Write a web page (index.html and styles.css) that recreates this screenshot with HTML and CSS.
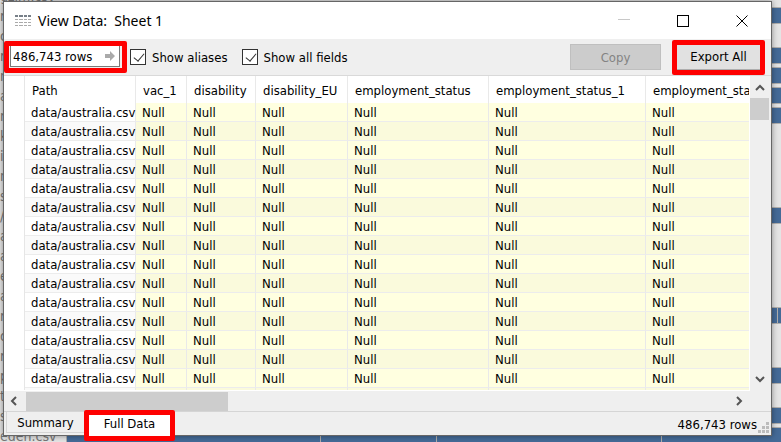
FILE: index.html
```
<!DOCTYPE html>
<html lang="en">
<head>
    <meta charset="UTF-8">
    <meta name="viewport" content="width=device-width, initial-scale=1.0">
    <title>View Data: Sheet 1</title>
    <link rel="stylesheet" href="styles.css">
</head>
<body>
    <div class="backdrop" aria-hidden="true">
        <div class="file-list" id="file-list"></div>
        <div class="chart" id="chart"></div>
    </div>

    <main class="window">
        <header class="title-bar">
            <svg class="sheet-icon" width="16" height="12" viewBox="0 0 16 12">
                <path d="M0 1h3M4 1h4M9 1h3M13 1h3" stroke="#777f88" stroke-width="2"/>
                <path d="M0 4.500h3M4 4.500h4M9 4.500h3M13 4.500h3M0 7.500h3M4 7.500h4M9 7.500h3M13 7.500h3M0 10.500h3M4 10.500h4M9 10.500h3M13 10.500h3" stroke="#aaa"/>
            </svg>
            <h1>View Data:&nbsp; Sheet 1</h1>
            <button class="window-button" aria-label="Minimize">
                <svg width="12" height="12"><path d="M0 4.500h12" stroke="#c8c8c8"/></svg>
            </button>
            <button class="window-button" aria-label="Maximize">
                <svg width="12" height="12"><rect x=".5" y=".5" width="11" height="11" fill="none" stroke="#000"/></svg>
            </button>
            <button class="window-button" aria-label="Close">
                <svg width="12" height="12"><path d="M.5 .5l11 11M11.500 .5l-11 11" stroke="#000"/></svg>
            </button>
        </header>

        <div class="toolbar">
            <div class="row-count marked">
                <div class="field">
                    <input type="text" value="486,743 rows" aria-label="Row count">
                    <svg width="10" height="10"><path d="M0 3h5V0l5 5-5 5V7H0z" fill="#aaa"/></svg>
                </div>
            </div>
            <label class="check"><input type="checkbox" checked>Show aliases</label>
            <label class="check"><input type="checkbox" checked>Show all fields</label>
            <button class="tool-button copy" disabled>Copy</button>
            <div class="export marked"><button class="tool-button">Export All</button></div>
        </div>

        <div class="grid">
            <div class="table-view">
                <table>
                    <colgroup>
                        <col class="col-path"><col class="col-vac"><col class="col-dis"><col class="col-eu">
                        <col class="col-emp"><col class="col-emp-1"><col class="col-rest">
                    </colgroup>
                    <thead>
                        <tr><th>Path</th><th>vac_1</th><th>disability</th><th>disability_EU</th><th>employment_status</th><th>employment_status_1</th><th>employment_status_2</th></tr>
                    </thead>
                    <tbody id="rows"></tbody>
                </table>
            </div>
            <div class="scroll-y">
                <svg width="10" height="7"><path d="M1 6l4-4 4 4" fill="none" stroke="#555" stroke-width="2"/></svg>
                <div class="thumb"></div>
                <svg width="10" height="7"><path d="M1 1l4 4 4-4" fill="none" stroke="#555" stroke-width="2"/></svg>
            </div>
        </div>
        <div class="scroll-x">
            <svg width="7" height="10"><path d="M6 1L2 5l4 4" fill="none" stroke="#555" stroke-width="2"/></svg>
            <div class="thumb"></div>
            <svg width="7" height="10"><path d="M1 1l4 4-4 4" fill="none" stroke="#555" stroke-width="2"/></svg>
        </div>

        <footer class="status-bar">
            <button class="tab">Summary</button>
            <div class="tab-mark marked"><button class="tab active">Full Data</button></div>
            <span class="total">486,743 rows</span>
            <svg class="grip" width="11" height="11"><path d="M8 0h3v3H8zM4 4h3v3H4zM8 4h3v3H8zM0 8h3v3H0zM4 8h3v3H4zM8 8h3v3H8z" fill="#bbb"/></svg>
        </footer>
    </main>

    <script>
        const rows = document.getElementById('rows');
        for (let i = 0; i < 16; i++) {
            const row = rows.insertRow();
            row.insertCell().textContent = 'data/australia.csv';
            for (let c = 0; c < 6; c++) {
                row.insertCell().textContent = 'Null';
            }
        }

        // one label per line, with a bar where the file has data
        const names = ['gzim.csv', 'r', 'c', 'r', 'n', 'a', 'm', 'k', 'i', 'n', 's', '/', 'a', 'a', 'e', 'a', 'r', 'o', 'r', 'p', 't', 's', 'eden.csv'];
        const bars = {
            1: [], 3: [], 4: [], 5: [], 6: [], 11: [], 16: [711], 19: [], 21: [], 22: [254, 116, 225]
        };
        names.forEach((name, i) => {
            const label = document.createElement('span');
            label.textContent = name;
            document.getElementById('file-list').appendChild(label);
            const bar = document.createElement('div');
            bar.className = bars[i] ? 'bar filled' : 'bar';
            (bars[i] || []).forEach(width => {
                const part = document.createElement('div');
                part.className = 'part';
                part.style.width = width + 'px';
                bar.appendChild(part);
            });
            document.getElementById('chart').appendChild(bar);
        });
    </script>
</body>
</html>
```
FILE: styles.css
```
* {
    box-sizing: border-box;
}
body {
    margin: 0;
    height: 100vh;
    padding: 1px 9px 6px 3px;
    overflow: hidden;
    font-family: "DejaVu Sans Condensed", "Noto Sans", sans-serif;
    font-size: 13px;
    color: #000;
    background: #e4e4e4;
}
button, input {
    font: inherit;
    color: inherit;
}
button {
    border: none;
    padding: 0;
    background: none;
}
svg {
    display: block;
    flex: none;
}

/* the workbook behind the dialog */
.backdrop {
    position: absolute;
    inset: 0;
    display: flex;
    overflow: hidden;
}
.file-list {
    flex: none;
    width: 67px;
    display: flex;
    flex-direction: column;
    margin-top: -14px;
    font-size: 14px;
    line-height: 20px;
    color: #777;
}
.chart {
    flex: 1;
    margin-top: -14px;
}
.bar {
    display: flex;
    height: 15px;
    margin: 2px 0 5px;
}
.bar.filled {
    height: 15px;
    background: #446a97;
    outline: 1px solid #b0aeac;
}
.bar:first-child {
    margin-top: 0;
    height: 17px;
}
.part {
    flex: none;
    border-right: 1px solid #b0aeac;
}

.window {
    position: relative;
    height: 100%;
    display: flex;
    flex-direction: column;
    border: 1px solid #666;
    background: #efefef;
    box-shadow: 0 0 6px rgba(0, 0, 0, 0.4);
}
.title-bar {
    flex: none;
    height: 37px;
    display: flex;
    align-items: center;
    background: #fff;
}
.title-bar h1 {
    flex: 1;
    margin: 0 0 0 7px;
    font-family: "Noto Sans", sans-serif;
    font-size: 14px;
    font-weight: normal;
}
.sheet-icon {
    margin-left: 11px;
}
.window-button {
    width: 59px;
    height: 37px;
    display: flex;
    align-items: center;
    justify-content: center;
}

.toolbar {
    flex: none;
    height: 37px;
    display: flex;
    align-items: center;
    border-bottom: 1px solid #d9d9d9;
}
.marked {
    border: 5px solid #fe0000;
    border-radius: 2px;
}
.row-count {
    width: 123px;
    height: 32px;
    padding: 0 2px 1px 1px;
}
.field {
    height: 100%;
    display: flex;
    align-items: center;
    padding-right: 4px;
    border: 1px solid #7a7a7a;
    border-top: none;
    background: #fff;
}
.field input {
    flex: 1;
    min-width: 0;
    height: 20px;
    padding: 0 2px;
    border: none;
    background: none;
}
.check {
    display: flex;
    align-items: center;
    margin-left: 3px;
}
.check + .check {
    margin-left: 14px;
}
.check input {
    appearance: none;
    width: 16px;
    height: 16px;
    margin: 0 6px 0 0;
    border: 1px solid #333;
    background: #fff;
}
.check input:checked::before {
    content: "";
    display: block;
    width: 5px;
    height: 9px;
    margin: 1px 0 0 5px;
    border: solid #333;
    border-width: 0 1px 1px 0;
    transform: rotate(40deg);
}
.tool-button {
    border: 1px solid #adadad;
    background: #e1e1e1;
}
.copy {
    width: 91px;
    height: 26px;
    margin-left: auto;
    border-color: #bfbfbf;
    background: #ccc;
    color: #838383;
}
.export {
    width: 93px;
    height: 35px;
    margin: 0 6px 0 11px;
}
.export button {
    width: 100%;
    height: 100%;
    border-width: 0 0 1px;
}

.grid {
    flex: 1;
    min-height: 0;
    display: flex;
    background: #fff;
}
.table-view {
    flex: 1;
    min-width: 0;
    margin: 0 1px 1px 20px;
    border-left: 1px solid #e6e6e6;
    overflow: hidden;
}
table {
    table-layout: fixed;
    width: 760px;
    border-collapse: separate;
    border-spacing: 0;
}
.col-path { width: 111px; }
.col-vac { width: 51px; }
.col-dis { width: 69px; }
.col-eu { width: 92px; }
.col-emp { width: 141px; }
.col-emp-1 { width: 157px; }
th, td {
    padding: 1px 0 0 6px;
    border-right: 1px solid #e9e9e9;
    font-weight: normal;
    text-align: left;
    white-space: nowrap;
}
th {
    height: 27px;
    padding-left: 7px;
}
td {
    height: 19px;
    line-height: 17px;
    border-bottom: 1px solid #ececec;
    background: #ffffe0;
}
tr:nth-child(even) td {
    background: #fafadc;
}
td:first-child {
    background: #fff;
}
tr:nth-child(even) td:first-child {
    background: #fafafa;
}

.scroll-y {
    flex: none;
    width: 21px;
    display: flex;
    flex-direction: column;
    align-items: center;
    padding: 8px 2px 8px 0;
    background: #efefef;
}
.scroll-y .thumb {
    width: 19px;
    height: 22px;
    margin: 7px 0 auto;
    background: #cdcdcd;
}
.scroll-x {
    flex: none;
    height: 20px;
    display: flex;
    align-items: center;
    padding: 0 28px 0 6px;
}
.scroll-x .thumb {
    width: 202px;
    height: 19px;
    margin: 0 auto 0 9px;
    background: #cdcdcd;
}

.status-bar {
    flex: none;
    height: 24px;
    display: flex;
    border-top: 1px solid #d5d5d5;
}
.tab {
    width: 78px;
    height: 21px;
    margin-left: 2px;
    border: solid #d5d5d5;
    border-width: 0 0 1px 1px;
}
.tab-mark {
    width: 91px;
    height: 31px;
    margin-top: -2px;
}
.tab.active {
    width: 100%;
    height: 100%;
    margin: 0;
    padding-bottom: 4px;
    border: none;
    background: #fff;
}
.total {
    margin-left: auto;
    line-height: 25px;
}
.grip {
    margin: 10px 2px 0 1px;
}
```
